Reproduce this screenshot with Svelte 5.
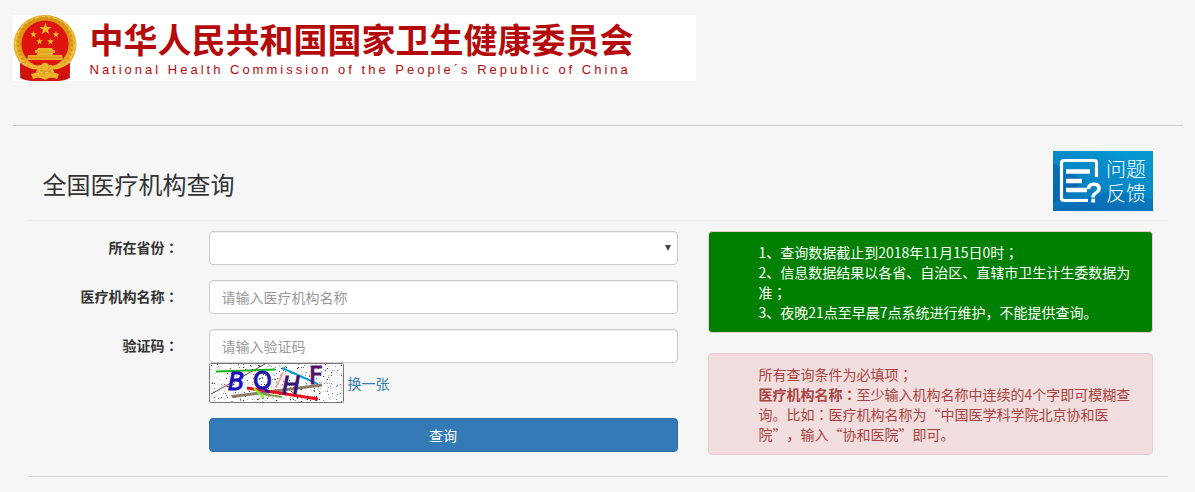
<script>
  let province = $state("");
  let name = $state("");
  let code = $state("");
  let seed = $state(7);

  const palette = ["#222", "#c2185b", "#2e9e4f", "#2b3fd0", "#7a3db8", "#18a0a0", "#e8a33a", "#8a8a8a", "#111"];

  // speckles behind the captcha letters
  function speckles(start) {
    let s = start * 7919;
    const rnd = () => (s = (s * 16807) % 2147483647) / 2147483647;
    return Array.from({ length: 620 }, () => ({
      x: Math.floor(rnd() * 133) + 1,
      y: Math.floor(rnd() * 38) + 1,
      fill: palette[Math.floor(rnd() * palette.length)],
      faint: rnd() > 0.45,
    }));
  }
  let dots = $derived(speckles(seed));

  function star(cx, cy, r) {
    return Array.from({ length: 10 }, (_, i) => {
      const a = (Math.PI / 5) * i - Math.PI / 2;
      const d = i % 2 ? r * 0.4 : r;
      return `${(cx + d * Math.cos(a)).toFixed(2)},${(cy + d * Math.sin(a)).toFixed(2)}`;
    }).join(" ");
  }
  const stars = [[32.5, 14, 6.5], [20.5, 19.5, 3.6], [43, 19.5, 3.6], [26.5, 26.5, 3.6], [37.5, 26.5, 3.6]];
</script>

<div class="container">
  <header class="banner">
    <svg class="emblem" viewBox="0 0 64 66" aria-hidden="true">
      <defs>
        <radialGradient id="gold" cx="0.5" cy="0.45" r="0.55">
          <stop offset="0.7" stop-color="#d9930f" />
          <stop offset="0.88" stop-color="#efba38" />
          <stop offset="1" stop-color="#d29a2a" />
        </radialGradient>
      </defs>
      <path d="M8 46 L56 46 L57 63 L52 65 L46 66 L18 66 L12 65 L7 63 Z" fill="#d41310" />
      <path d="M11 51v13M15 53v12M49 53v12M53 51v13" stroke="#9a0f0b" />
      <ellipse cx="32" cy="29.5" rx="31.5" ry="29.5" fill="url(#gold)" />
      <ellipse cx="32" cy="29.5" rx="27" ry="26.5" fill="none" stroke="#cf8f1c" stroke-width="2" stroke-dasharray="2 2.5" />
      <ellipse cx="32" cy="29.5" rx="29.5" ry="28" fill="none" stroke="#f7d56c" stroke-dasharray="3 3" />
      <circle cx="32" cy="29" r="23.5" fill="#de1410" />
      <path d="M7 48 Q16 55 25 53 L21 60 Q13 61 7 58 Z M57 48 Q48 55 39 53 L43 60 Q51 61 57 58 Z" fill="#d41310" />
      {#each stars as [x, y, r]}
        <polygon points={star(x, y, r)} fill="#f2b52c" />
      {/each}
      <path d="M25 33h14l1 2h2v3h-2v2H24v-2h-2v-3h2z" fill="#edb02b" />
      <path d="M15 40h34l1 5H14z" fill="#e9a723" />
      <path d="M23 37h18M15 42.5h34" stroke="#d08a1a" stroke-width="0.6" />
      <path d="M12 46 Q22 54 32 48 Q42 54 52 46 L48 53 Q39 56 32 53 Q25 56 16 53 Z" fill="#edb52f" />
      <circle cx="32" cy="52" r="4" fill="#f0b62f" stroke="#d08a1a" stroke-dasharray="1.5 1" />
      <path d="M18 59 Q25 56 32 59 Q39 56 46 59 L44 64 Q38 61 32 65 Q26 61 20 64 Z" fill="#efb02a" />
    </svg>
    <div class="org">
      <div class="org-cn">中华人民共和国国家卫生健康委员会</div>
      <div class="org-en">National Health Commission of the People´s Republic of China</div>
    </div>
  </header>

  <hr class="divider" />

  <main>
    <div class="heading">
      <h1>全国医疗机构查询</h1>
      <a class="feedback" href="#feedback" aria-label="问题反馈">
        <svg viewBox="0 0 100 60" aria-hidden="true">
          <defs>
            <linearGradient id="sky" x1="0" y1="1" x2="0.7" y2="0">
              <stop offset="0" stop-color="#0a6fb6" />
              <stop offset="0.5" stop-color="#0784c4" />
              <stop offset="1" stop-color="#0797d0" />
            </linearGradient>
          </defs>
          <rect width="100" height="60" fill="url(#sky)" />
          <path d="M0 12 L32 30 L0 52 Z" fill="#0558a4" opacity="0.5" />
          <path d="M0 60 L58 40 L100 48 V60 Z" fill="#0a62ad" opacity="0.4" />
          <path d="M43.5 26V12q0-2.500-2.500-2.500H11q-2.500 0-2.500 2.500v35q0 2.500 2.500 2.500h24" fill="none" stroke="#fff" stroke-width="3.2" />
          <path d="M13 20.5h24M13 30h16M13 39h21" stroke="#fff" stroke-width="4.5" />
          <text class="mark" x="33" y="51">?</text>
          <text class="tip" x="53" y="26">问题</text>
          <text class="tip" x="53" y="50">反馈</text>
        </svg>
      </a>
    </div>

    <div class="content">
      <form class="query" onsubmit={(e) => e.preventDefault()}>
        <label for="province">所在省份<span class="mid">：</span></label>
        <div class="select">
          <select id="province" bind:value={province}>
            <option value=""></option>
            <option value="11">北京市</option>
            <option value="31">上海市</option>
          </select>
        </div>

        <label for="name">医疗机构名称<span class="mid">：</span></label>
        <input id="name" type="text" placeholder="请输入医疗机构名称" bind:value={name} />

        <label for="code">验证码<span class="mid">：</span></label>
        <div>
          <input id="code" type="text" placeholder="请输入验证码" bind:value={code} />
          <div class="captcha">
            <svg viewBox="0 0 135 40" role="img" aria-label="验证码">
              <rect x="0.5" y="0.5" width="134" height="39" rx="1" fill="#fff" stroke="#777" />
              {#each dots as d}
                <rect x={d.x} y={d.y} width="1" height="1" fill={d.fill} opacity={d.faint ? 0.25 : 0.9} />
              {/each}
              <path d="M2 31 56 1" stroke="#6b4a42" />
              <path d="M7 8.5 66 6.5" stroke="#17b51c" stroke-width="2" />
              <path d="M74 9 67 25" stroke="#f0a8a0" stroke-width="2" />
              <path d="M73 5 109 21" stroke="#0b9bd0" stroke-width="2" />
              <path d="M23 33.5 113 22" stroke="#8a7a68" stroke-width="3" />
              <path d="M38 25 109 36" stroke="#ea0f18" stroke-width="3" />
              <text class="ch slant" x="19" y="27" fill="#1a0fb8" stroke="#1a0fb8">B</text>
              <text class="ch" x="44" y="26" fill="#2412a8" stroke="#2412a8">Q</text>
              <text class="ch slant" x="73" y="31" fill="#3a1370" stroke="#3a1370">H</text>
              <text class="ch" x="100" y="21" fill="#571169" stroke="#571169">F</text>
              <path d="M54 31 73 34" stroke="#7d9a3c" stroke-width="2" />
              <path d="M45 25 55 35" stroke="#7dfa12" stroke-width="2" />
            </svg>
            <a href="#captcha" onclick={(e) => { e.preventDefault(); seed += 1; }}>换一张</a>
          </div>
        </div>

        <button type="submit">查询</button>
      </form>

      <aside>
        <div class="alert notice">
          1、查询数据截止到2018年11月15日0时<span class="mid">；</span><br />
          2、信息数据结果以各省、自治区、直辖市卫生计生委数据为准<span class="mid">；</span><br />
          3、夜晚21点至早晨7点系统进行维护，不能提供查询。
        </div>
        <div class="alert rules">
          所有查询条件为必填项<span class="mid">；</span><br />
          <strong>医疗机构名称<span class="mid">：</span></strong>至少输入机构名称中连续的4个字即可模糊查询。比如<span class="mid">：</span>医疗机构名称为“中国医学科学院北京协和医院”，输入“协和医院”即可。
        </div>
      </aside>
    </div>
  </main>
</div>

<style>
  :global(body) { background: #f6f6f6; }
  .container {
    max-width: 1170px;
    margin: 0 auto;
    padding-top: 15px;
    font-family: "Noto Sans CJK SC", sans-serif;
    font-size: 14px;
    line-height: 20px;
    color: #333;
    text-spacing-trim: space-all;
  }
  .container * { box-sizing: border-box; }

  .banner { display: flex; gap: 13px; max-width: 683px; background: #fff; color: #b50a0c; }
  .emblem { width: 64px; height: 66px; flex: none; }
  .org { white-space: nowrap; padding-top: 2px; }
  .org-cn { font-size: 34px; line-height: 44px; font-weight: 700; }
  .org-en { font-family: "Liberation Sans", Arial, sans-serif; font-size: 13px; line-height: 18px; letter-spacing: 3px; }

  .divider { margin: 44px 0 0; border: 0; border-top: 1px solid #ccc; }

  main { margin: 0 15px; padding-bottom: 21px; border-bottom: 1px solid #d8d8d8; }
  .heading { display: flex; justify-content: space-between; align-items: center; padding: 25px 15px 9px; border-bottom: 1px solid #eee; }
  h1 { margin: 0; padding-top: 6px; font-size: 24px; line-height: 32px; font-weight: 400; }
  .feedback { display: block; width: 100px; height: 60px; }
  .feedback svg { display: block; }
  .mark { font: 27px "Liberation Sans", sans-serif; fill: #fff; stroke: #fff; }
  .tip { font-size: 20px; font-weight: 300; fill: #fff; }

  .content { display: grid; grid-template-columns: 7fr 5fr; padding-top: 10px; }
  .query { display: grid; grid-template-columns: 151px 1fr; gap: 15px 30px; align-items: start; align-content: start; padding-right: 15px; }
  label { padding-top: 6px; text-align: right; font-weight: 700; }
  .mid { font-family: "Noto Sans CJK TC", sans-serif; line-height: 1; }

  input, select {
    display: block;
    width: 100%;
    height: 34px;
    padding: 6px 12px;
    border: 1px solid #ccc;
    border-radius: 4px;
    background: #fff;
    box-shadow: inset 0 1px 1px rgba(0, 0, 0, 0.075);
    font: inherit;
    color: #555;
  }
  input::placeholder { color: #999; opacity: 1; }
  select { appearance: none; }
  .select { position: relative; }
  .select::after {
    content: "";
    position: absolute;
    right: 7px;
    top: 14px;
    border: 3px solid transparent;
    border-top: 6px solid #444;
    border-bottom: 0;
    pointer-events: none;
  }

  .captcha { display: flex; align-items: center; gap: 4px; }
  .captcha svg { width: 135px; height: 40px; overflow: visible; }
  .ch { font: 24px "DejaVu Sans", sans-serif; }
  .slant { font-style: italic; }
  a { color: #337ab7; text-decoration: none; }

  button {
    grid-column: 2;
    height: 34px;
    border: 1px solid #2e6da4;
    border-radius: 4px;
    background: #337ab7;
    color: #fff;
    font: inherit;
    cursor: pointer;
  }

  aside { padding: 0 15px; }
  .alert { padding: 10px 20px 10px 50px; border: 1px solid #ebccd1; border-radius: 4px; }
  .notice { margin-bottom: 20px; background: #008000; color: #fff; }
  .rules { background: #f2dede; color: #a94442; }
</style>
